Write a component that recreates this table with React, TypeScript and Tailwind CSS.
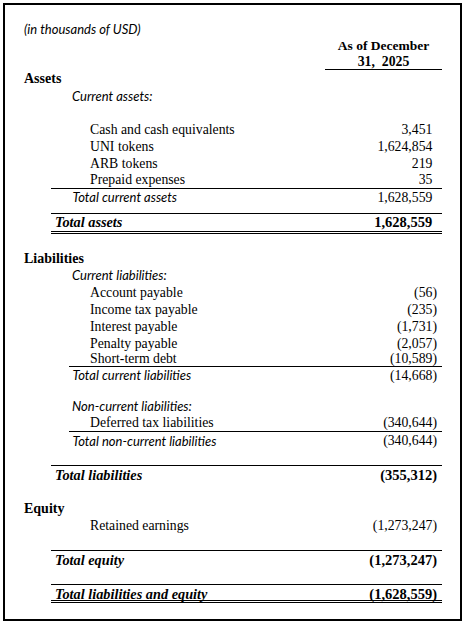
import React from "react";

const serif = "font-['Liberation_Serif',serif]";
const sans = "font-['Lato',sans-serif]";

type RowProps = {
  h: string;
  wrap?: string;
  labelCls?: string;
  label?: string;
  value?: string;
  valueCls?: string;
  neg?: boolean;
};

function Row({ h, wrap = "ml-0 mr-[18px]", labelCls = "", label, value, valueCls = "", neg }: RowProps) {
  return (
    <div className={`flex ${h}`}>
      <div className={`flex flex-1 items-center ${wrap}`}>
        <div className={`flex-1 whitespace-nowrap ${labelCls}`}>{label}</div>
        {value !== undefined && (
          <div className={`whitespace-nowrap pr-[5px] ${valueCls}`}>
            {value}
            {!neg && <span className="invisible">)</span>}
          </div>
        )}
      </div>
    </div>
  );
}

const reg = `${serif} text-[13.75px] leading-none`;
const regNum = `${serif} text-[13.75px] leading-none`;
const head = `${serif} text-[14px] font-bold leading-none`;
const ital = `${sans} italic text-[13px] leading-none`;
const boldItal = `${serif} italic font-bold text-[14.3px] leading-none`;
const boldNum = `${serif} font-bold text-[14.5px] leading-none`;

export default function App() {
  return (
    <div className="w-[464px] h-[624px] bg-white text-black overflow-hidden">
      <div className="ml-[3px] mt-[3px] w-[459px] h-[618px] border-2 border-black flex flex-col">
        <div className="h-[16px] shrink-0" />
        <Row h="h-[16px]" labelCls={`pl-[19px] ${ital}`} label="(in thousands of USD)" />
        <div className="flex h-[17px] items-center">
          <div className={`ml-[320px] w-[117px] text-center ${serif} text-[13.5px] font-bold leading-none`}>
            As of December
          </div>
        </div>
        <div className="flex h-[16px]">
          <div
            className={`ml-[320px] w-[117px] border-b border-black flex items-center justify-center ${serif} text-[13.75px] font-bold leading-none whitespace-pre`}
          >
            31,  2025
          </div>
        </div>
        <Row h="h-[18px]" labelCls={`pl-[19px] ${head}`} label="Assets" />
        <Row h="h-[16px]" labelCls={`pl-[67px] ${ital}`} label="Current assets:" />
        <div className="h-[18px] shrink-0" />
        <Row h="h-[16px]" labelCls={`pl-[85px] ${reg}`} label="Cash and cash equivalents" value="3,451" valueCls={regNum} />
        <Row h="h-[17px]" labelCls={`pl-[85px] ${reg}`} label="UNI tokens" value="1,624,854" valueCls={regNum} />
        <Row h="h-[17px]" labelCls={`pl-[85px] ${reg}`} label="ARB tokens" value="219" valueCls={regNum} />
        <Row h="h-[16px]" labelCls={`pl-[85px] ${reg}`} label="Prepaid expenses" value="35" valueCls={regNum} />
        <Row
          h="h-[18px]"
          wrap="ml-[46px] mr-[18px] border-t border-black"
          labelCls={`pl-[21.5px] ${ital}`}
          label="Total current assets"
          value="1,628,559"
          valueCls={regNum}
        />
        <div className="h-[7px] shrink-0" />
        <Row
          h="h-[21px]"
          wrap="ml-[46px] mr-[18px] border-t border-b-[3px] border-b-black border-double border-t-black border-t-solid"
          labelCls={`pl-[4px] ${boldItal}`}
          label="Total assets"
          value="1,628,559"
          valueCls={boldNum}
        />
        <div className="h-[16px] shrink-0" />
        <Row h="h-[17px]" labelCls={`pl-[19px] ${head}`} label="Liabilities" />
        <Row h="h-[17px]" labelCls={`pl-[67px] ${ital}`} label="Current liabilities:" />
        <Row h="h-[17px]" labelCls={`pl-[85px] ${reg}`} label="Account payable" value="(56)" neg valueCls={regNum} />
        <Row h="h-[17px]" labelCls={`pl-[85px] ${reg}`} label="Income tax payable" value="(235)" neg valueCls={regNum} />
        <Row h="h-[17px]" labelCls={`pl-[85px] ${reg}`} label="Interest payable" value="(1,731)" neg valueCls={regNum} />
        <Row h="h-[17px]" labelCls={`pl-[85px] ${reg}`} label="Penalty payable" value="(2,057)" neg valueCls={regNum} />
        <Row h="h-[14px]" labelCls={`pl-[85px] ${reg}`} label="Short-term debt" value="(10,589)" neg valueCls={regNum} />
        <Row
          h="h-[18px]"
          wrap="ml-[64px] mr-[18px] border-t border-black"
          labelCls={`pl-[3.5px] ${ital}`}
          label="Total current liabilities"
          value="(14,668)"
          neg
          valueCls={regNum}
        />
        <div className="h-[14px] shrink-0" />
        <Row h="h-[17px]" labelCls={`pl-[67px] ${ital}`} label="Non-current liabilities:" />
        <Row h="h-[16px]" labelCls={`pl-[85px] ${reg}`} label="Deferred tax liabilities" value="(340,644)" neg valueCls={regNum} />
        <Row
          h="h-[19px]"
          wrap="ml-[64px] mr-[18px] border-t border-black"
          labelCls={`pl-[3.5px] ${ital}`}
          label="Total non-current liabilities"
          value="(340,644)"
          neg
          valueCls={regNum}
        />
        <div className="h-[15px] shrink-0" />
        <Row
          h="h-[19px]"
          wrap="ml-[46px] mr-[18px] border-t border-black"
          labelCls={`pl-[4px] ${boldItal}`}
          label="Total liabilities"
          value="(355,312)"
          neg
          valueCls={boldNum}
        />
        <div className="h-[16px] shrink-0" />
        <Row h="h-[17px]" labelCls={`pl-[19px] ${head}`} label="Equity" />
        <Row h="h-[17px]" labelCls={`pl-[85px] ${reg}`} label="Retained earnings" value="(1,273,247)" neg valueCls={regNum} />
        <div className="h-[16px] shrink-0" />
        <Row
          h="h-[19px]"
          wrap="ml-[46px] mr-[18px] border-t border-black"
          labelCls={`pl-[4px] ${boldItal}`}
          label="Total equity"
          value="(1,273,247)"
          neg
          valueCls={boldNum}
        />
        <div className="h-[15px] shrink-0" />
        <Row
          h="h-[19px]"
          wrap="ml-[46px] mr-[18px] border-t border-b-[3px] border-b-black border-double border-t-black border-t-solid pt-[3px]"
          labelCls={`pl-[4px] ${boldItal}`}
          label="Total liabilities and equity"
          value="(1,628,559)"
          neg
          valueCls={boldNum}
        />
      </div>
    </div>
  );
}
